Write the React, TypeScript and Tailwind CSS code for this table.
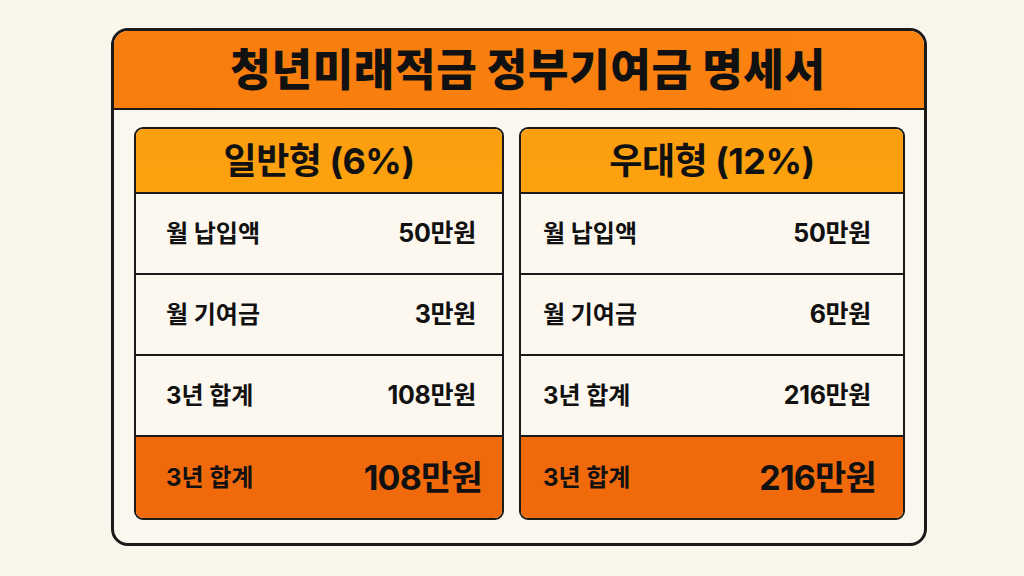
import React from "react";

type Row = { label: string; value: string };

const cards: { title: string; width: string; rows: Row[]; total: string; lastPad: string }[] = [
  {
    title: "일반형 (6%)",
    width: "w-[370px]",
    rows: [
      { label: "월 납입액", value: "50만원" },
      { label: "월 기여금", value: "3만원" },
      { label: "3년 합계", value: "108만원" },
    ],
    total: "108만원",
    lastPad: "pr-[20px]",
  },
  {
    title: "우대형 (12%)",
    width: "w-[386px]",
    rows: [
      { label: "월 납입액", value: "50만원" },
      { label: "월 기여금", value: "6만원" },
      { label: "3년 합계", value: "216만원" },
    ],
    total: "216만원",
    lastPad: "pr-[27px]",
  },
];

function Card({ c, leftPad, rightPad }: { c: (typeof cards)[number]; leftPad: string; rightPad: string }) {
  return (
    <div className={`${c.width} h-[393px] flex flex-col rounded-[9px] border-2 border-[#1a1a1a] overflow-hidden bg-[#fcf8ef]`}>
      <div className="h-[65px] shrink-0 flex items-center justify-center bg-gradient-to-b from-[#fb9e10] to-[#fda20e] border-b-2 border-[#1a1a1a]">
        <span className="text-[36px] font-bold text-[#111] tracking-[-0.5px]">{c.title}</span>
      </div>
      {c.rows.map((r, i) => (
        <div
          key={i}
          className={`h-[81px] shrink-0 flex items-center justify-between ${leftPad} ${rightPad} border-b-2 border-[#1a1a1a]`}
        >
          <span className="text-[24px] font-bold text-[#111]">{r.label}</span>
          <span className="text-[25px] font-bold text-[#111] tracking-[-0.3px]">{r.value}</span>
        </div>
      ))}
      <div className={`flex-1 flex items-center justify-between ${leftPad} ${c.lastPad} bg-[#f06a0c]`}>
        <span className="text-[24px] font-bold text-[#111]">3년 합계</span>
        <span className="text-[34px] font-bold text-[#111] tracking-[-0.8px]">{c.total}</span>
      </div>
    </div>
  );
}

export default function App() {
  return (
    <div
      className="w-[1024px] h-[576px] bg-[#faf6eb] pt-[28px] pl-[111px] overflow-hidden"
      style={{ fontFamily: 'Inter, "Noto Sans CJK KR", "Noto Sans", sans-serif' }}
    >
      <div className="w-[816px] h-[518px] rounded-[17px] border-[3px] border-[#1a1a1a] overflow-hidden bg-[#fbf7ee] flex flex-col">
        <div className="h-[79px] shrink-0 flex items-center justify-center pl-[18px] bg-gradient-to-r from-[#f77d0d] to-[#fb8311] border-b-2 border-[#1a1a1a]">
          <span className="text-[44px] font-black text-[#111] tracking-[0.7px]">청년미래적금 정부기여금 명세서</span>
        </div>
        <div className="flex gap-[15px] pl-[20px] pt-[17px]">
          <Card c={cards[0]} leftPad="pl-[30px]" rightPad="pr-[26px]" />
          <Card c={cards[1]} leftPad="pl-[22px]" rightPad="pr-[32px]" />
        </div>
      </div>
    </div>
  );
}
